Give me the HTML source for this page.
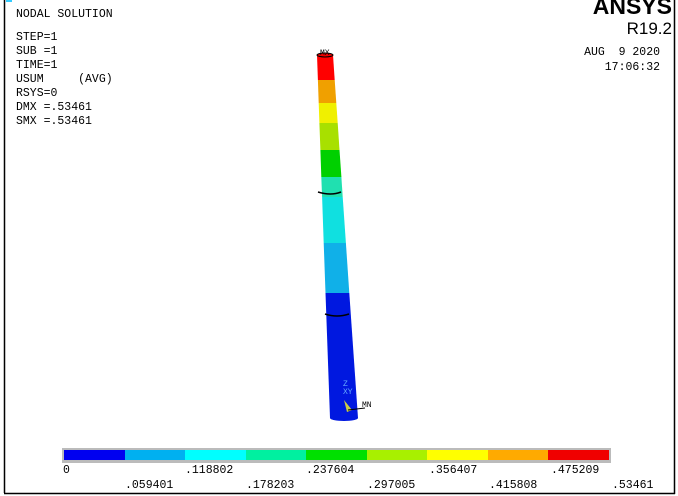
<!DOCTYPE html>
<html><head><meta charset="utf-8"><style>
html,body{margin:0;padding:0;background:#fff;width:678px;height:496px;overflow:hidden}
svg{display:block}
text{font-family:"Liberation Mono",monospace;font-size:11.5px;fill:#000;white-space:pre}
</style></head><body>
<svg width="678" height="496" viewBox="0 0 678 496" xml:space="preserve">
<rect x="0" y="0" width="678" height="496" fill="#fff"/>
<line x1="4.5" y1="0" x2="4.5" y2="493" stroke="#000" stroke-width="1.5"/>
<line x1="4" y1="493.5" x2="675" y2="493.5" stroke="#000" stroke-width="1.5"/>
<line x1="674.5" y1="0" x2="674.5" y2="494" stroke="#000" stroke-width="1.5"/>
<rect x="6" y="0" width="6" height="2" fill="#3cf"/>
<text x="16" y="17">NODAL SOLUTION</text>
<text x="16" y="40">STEP=1</text>
<text x="16" y="54">SUB =1</text>
<text x="16" y="68">TIME=1</text>
<text x="16" y="82">USUM     (AVG)</text>
<text x="16" y="96">RSYS=0</text>
<text x="16" y="110">DMX =.53461</text>
<text x="16" y="124">SMX =.53461</text>
<text x="672" y="14" text-anchor="end" style="font-family:'Liberation Sans',sans-serif;font-weight:bold;font-size:23px">ANSYS</text>
<text x="672" y="34" text-anchor="end" style="font-family:'Liberation Sans',sans-serif;font-size:17px">R19.2</text>
<text x="660" y="55" text-anchor="end">AUG  9 2020</text>
<text x="660" y="70" text-anchor="end">17:06:32</text>
<polygon points="317,55 333,55 334.7,80 317.9,80" fill="#f00"/>
<polygon points="317.9,80 334.7,80 336.3,103 318.7,103" fill="#f0a000"/>
<polygon points="318.7,103 336.3,103 337.7,123 319.4,123" fill="#f0f000"/>
<polygon points="319.4,123 337.7,123 339.5,150 320.4,150" fill="#a8e000"/>
<polygon points="320.4,150 339.5,150 341.4,177 321.3,177" fill="#00d000"/>
<polygon points="321.3,177 341.4,177 342.7,197 322.1,197" fill="#20e0b0"/>
<polygon points="322.1,197 342.7,197 345.9,243 323.7,243" fill="#10e0e0"/>
<polygon points="323.7,243 345.9,243 349.3,293 325.5,293" fill="#10b0e8"/>
<polygon points="325.5,293 349.3,293 358,418 330,418" fill="#0018e0"/>
<ellipse cx="344" cy="418" rx="14" ry="3" fill="#0018e0"/>
<ellipse cx="325" cy="55" rx="8" ry="2" fill="#e00" stroke="#000" stroke-width="1"/>
<path d="M318,192 Q331,196 341,192" stroke="#000" stroke-width="1.5" fill="none"/>
<path d="M325,314 Q337,318 349,314" stroke="#000" stroke-width="1.5" fill="none"/>
<text x="320" y="55" style="font-size:8px">MX</text>
<text x="343" y="386" style="font-size:8px;fill:#6af">Z</text>
<text x="343" y="394" style="font-size:8px;fill:#6af">XY</text>
<polygon points="344,400 347,412 352,410" fill="#cc4"/>
<line x1="348" y1="410" x2="365" y2="408" stroke="#000"/>
<text x="362" y="407" style="font-size:8px">MN</text>
<rect x="62" y="448" width="549" height="15" fill="#bbb"/>
<rect x="64" y="450" width="61" height="10" fill="#0000f0"/>
<rect x="125" y="450" width="60" height="10" fill="#00b0f0"/>
<rect x="185" y="450" width="61" height="10" fill="#00ffff"/>
<rect x="246" y="450" width="60" height="10" fill="#00f0a0"/>
<rect x="306" y="450" width="61" height="10" fill="#00e000"/>
<rect x="367" y="450" width="60" height="10" fill="#a8f000"/>
<rect x="427" y="450" width="61" height="10" fill="#ffff00"/>
<rect x="488" y="450" width="60" height="10" fill="#ffaa00"/>
<rect x="548" y="450" width="61" height="10" fill="#f00000"/>
<text x="63" y="473">0</text>
<text x="185" y="473">.118802</text>
<text x="306" y="473">.237604</text>
<text x="429" y="473">.356407</text>
<text x="551" y="473">.475209</text>
<text x="125" y="488">.059401</text>
<text x="246" y="488">.178203</text>
<text x="367" y="488">.297005</text>
<text x="489" y="488">.415808</text>
<text x="612" y="488">.53461</text>
</svg>
</body></html>
